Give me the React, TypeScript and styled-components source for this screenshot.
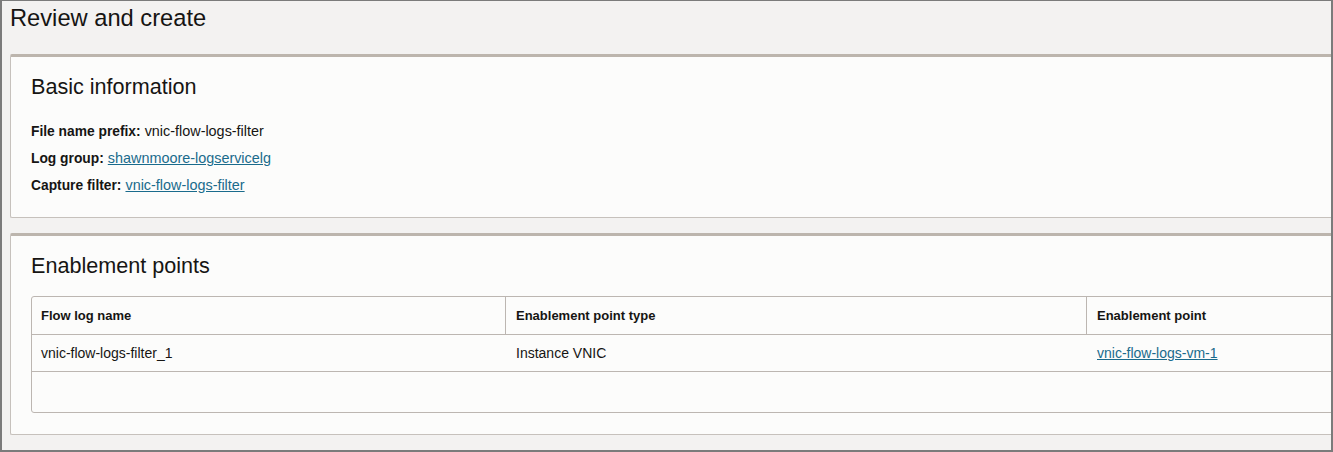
import React from 'react';
import styled, { createGlobalStyle } from 'styled-components';

const GlobalStyle = createGlobalStyle`
  html, body {
    margin: 0;
    padding: 0;
    overflow: hidden;
  }
  body {
    font-family: "Liberation Sans", Arial, sans-serif;
    color: #161513;
  }
`;

const Frame = styled.div`
  box-sizing: border-box;
  width: 1333px;
  height: 452px;
  background: #f3f2f1;
  border-top: 1px solid #7b7b7b;
  border-left: 2px solid #7b7b7b;
  border-right: 2px solid #7b7b7b;
  border-bottom: 2px solid #7b7b7b;
  padding-left: 8px;
  overflow: hidden;
`;

const PageTitle = styled.h1`
  margin: 0;
  height: 53px;
  padding-top: 4px;
  box-sizing: border-box;
  font-size: 23.7px;
  font-weight: 400;
  line-height: 26px;
  color: #161513;
`;

const Stack = styled.div`
  display: flex;
  flex-direction: column;
  gap: 15px;
  width: calc(100% + 40px);
`;

const Card = styled.section<{ $bottom: number }>`
  box-sizing: border-box;
  background: #fcfcfb;
  border-top: 3px solid #bcb5ad;
  border-left: 1px solid #c6c1bc;
  border-bottom: 1px solid #c6c1bc;
  border-radius: 2px;
  padding: 18px 20px ${({ $bottom }) => $bottom}px 20px;
`;

const CardTitle = styled.h2`
  margin: 0;
  font-size: 21.6px;
  font-weight: 400;
  line-height: 24px;
  color: #161513;
`;

const InfoList = styled.div`
  margin-top: 19px;
  display: flex;
  flex-direction: column;
`;

const InfoRow = styled.div`
  font-size: 14.4px;
  line-height: 27px;
`;

const Label = styled.b`
  font-size: 13.8px;
  font-weight: 700;
`;

const Link = styled.a`
  color: #1a6b8c;
  text-decoration: underline;
  cursor: pointer;
`;

const Table = styled.div`
  margin-top: 18px;
  border: 1px solid #bcb6b1;
  border-radius: 3px;
  background: #fcfcfb;
`;

const Row = styled.div<{ $height: number; $head?: boolean }>`
  display: grid;
  grid-template-columns: 473px 581px 1fr;
  height: ${({ $height }) => $height}px;
  border-bottom: 1px solid #bcb6b1;
  font-size: ${({ $head }) => ($head ? '13px' : '14px')};
  font-weight: ${({ $head }) => ($head ? 700 : 400)};
`;

const Cell = styled.div<{ $divider?: boolean; $first?: boolean }>`
  display: flex;
  align-items: center;
  padding-left: ${({ $first }) => ($first ? '8px' : '10px')};
  border-left: ${({ $divider }) => ($divider ? '1px solid #bcb6b1' : '1px solid transparent')};
  white-space: nowrap;
`;

const EmptyRow = styled.div`
  height: 40px;
`;

export default function App() {
  return (
    <>
      <GlobalStyle />
      <Frame>
        <PageTitle>Review and create</PageTitle>
        <Stack>
          <Card $bottom={18}>
            <CardTitle>Basic information</CardTitle>
            <InfoList>
              <InfoRow>
                <Label>File name prefix:</Label> vnic-flow-logs-filter
              </InfoRow>
              <InfoRow>
                <Label>Log group:</Label> <Link>shawnmoore-logservicelg</Link>
              </InfoRow>
              <InfoRow>
                <Label>Capture filter:</Label> <Link>vnic-flow-logs-filter</Link>
              </InfoRow>
            </InfoList>
          </Card>
          <Card $bottom={21}>
            <CardTitle>Enablement points</CardTitle>
            <Table>
              <Row $height={37} $head>
                <Cell $first>Flow log name</Cell>
                <Cell $divider>Enablement point type</Cell>
                <Cell $divider>Enablement point</Cell>
              </Row>
              <Row $height={36}>
                <Cell $first>vnic-flow-logs-filter_1</Cell>
                <Cell>Instance VNIC</Cell>
                <Cell>
                  <Link>vnic-flow-logs-vm-1</Link>
                </Cell>
              </Row>
              <EmptyRow />
            </Table>
          </Card>
        </Stack>
      </Frame>
    </>
  );
}
